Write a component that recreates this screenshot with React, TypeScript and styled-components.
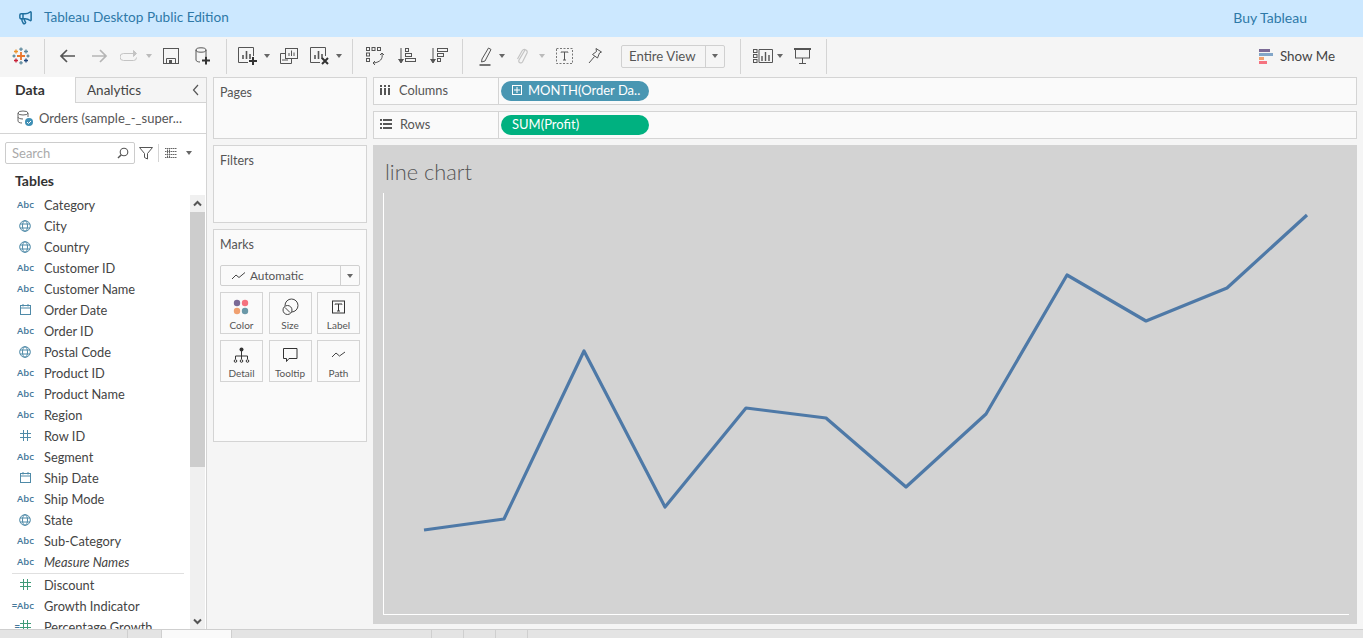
import React from 'react';
import styled, { createGlobalStyle } from 'styled-components';
import { Megaphone } from 'lucide-react';

const GlobalStyle = createGlobalStyle`
  html, body {
    margin: 0;
    padding: 0;
    height: 638px;
    overflow: hidden;
    background: #f5f5f5;
    font-family: "Lato", "Open Sans", sans-serif;
    color: #444;
  }
`;

const Page = styled.div`
  width: 1363px;
  height: 638px;
  display: flex;
  flex-direction: column;
  overflow: hidden;
`;

const Banner = styled.div`
  height: 37px;
  flex: none;
  box-sizing: border-box;
  background: #cce8ff;
  display: flex;
  align-items: center;
  padding: 0 0 3px 18px;
  color: #2e79a8;
  font-size: 14px;
`;

const BannerTitle = styled.span`
  margin-left: 11px;
  flex: 1;
  font-size: 13.6px;
`;

const BuyLink = styled.span`
  margin-right: 56px;
`;

const Toolbar = styled.div`
  height: 38px;
  flex: none;
  display: flex;
  align-items: center;
  background: #f5f5f5;
`;

const Tool = styled.div<{ $ml?: number }>`
  flex: none;
  margin-left: ${(p) => p.$ml ?? 0}px;
  display: flex;
  align-items: center;
  justify-content: center;
  svg { display: block; }
`;

const ToolSep = styled.div<{ $ml: number }>`
  flex: none;
  width: 1px;
  height: 35px;
  background: #d4d4d4;
  margin-left: ${(p) => p.$ml}px;
`;

const Caret = styled.div<{ $ml: number; $light?: boolean }>`
  flex: none;
  margin-left: ${(p) => p.$ml}px;
  margin-right: 1px;
  width: 0;
  height: 0;
  border-left: 3px solid transparent;
  border-right: 3px solid transparent;
  border-top: 4px solid ${(p) => (p.$light ? '#bbb' : '#666')};
`;

const FitSelect = styled.div`
  flex: none;
  margin-left: 19px;
  width: 104px;
  height: 23px;
  box-sizing: border-box;
  border: 1px solid #d0d0d0;
  border-radius: 2px;
  display: flex;
  align-items: center;
  font-size: 13.2px;
  color: #555;
`;

const FitLabel = styled.span`
  flex: 1;
  padding-left: 7px;
`;

const FitArrow = styled.div`
  width: 18px;
  height: 100%;
  border-left: 1px solid #d0d0d0;
  display: flex;
  align-items: center;
  justify-content: center;
`;

const ShowMe = styled.div`
  margin-left: auto;
  margin-right: 28px;
  display: flex;
  align-items: center;
  gap: 6px;
  font-size: 13.4px;
  color: #444;
`;

const Main = styled.div`
  flex: 1;
  min-height: 0;
  display: flex;
  padding: 2px 6px 0 0;
  gap: 6px;
`;

const DataPane = styled.div`
  width: 207px;
  flex: none;
  box-sizing: border-box;
  background: #fff;
  border-right: 1px solid #d4d4d4;
  display: flex;
  flex-direction: column;
  overflow: hidden;
`;

const Tabs = styled.div`
  height: 26px;
  flex: none;
  display: flex;
`;

const DataTab = styled.div`
  width: 60px;
  padding-left: 15px;
  font-size: 14px;
  font-weight: 700;
  line-height: 26px;
  color: #333;
`;

const AnalyticsTab = styled.div`
  flex: 1;
  box-sizing: border-box;
  background: #f5f5f5;
  border: 1px solid #d4d4d4;
  border-right: none;
  padding-left: 11px;
  font-size: 13.5px;
  line-height: 24px;
  color: #444;
  display: flex;
  align-items: center;
  justify-content: space-between;
`;

const SourceRow = styled.div`
  height: 31px;
  flex: none;
  box-sizing: border-box;
  border-bottom: 1px solid #d4d4d4;
  display: flex;
  align-items: center;
  padding-left: 17px;
  gap: 6px;
  font-size: 13px;
  color: #555;
`;

const SearchRow = styled.div`
  flex: none;
  height: 30px;
  box-sizing: border-box;
  padding: 8px 0 0 5px;
  display: flex;
  align-items: center;
`;

const SearchBox = styled.div`
  width: 130px;
  height: 22px;
  box-sizing: border-box;
  border: 1px solid #ccc;
  border-radius: 2px;
  display: flex;
  align-items: center;
  justify-content: space-between;
  padding: 0 5px 0 6px;
  font-size: 13px;
  color: #aaa;
`;

const VSep = styled.div`
  width: 1px;
  height: 18px;
  margin-left: 5px;
  background: #d4d4d4;
`;

const TablesHead = styled.div`
  flex: none;
  height: 27px;
  margin-top: 3px;
  line-height: 27px;
  padding-left: 15px;
  font-size: 14px;
  font-weight: 700;
  color: #333;
`;

const ListWrap = styled.div`
  flex: 1;
  min-height: 0;
  display: flex;
  overflow: hidden;
`;

const FieldList = styled.div`
  flex: 1;
  min-width: 0;
`;

const FieldRow = styled.div`
  height: 21px;
  display: flex;
  align-items: center;
  font-size: 12.8px;
  color: #444;
  white-space: nowrap;
`;

const FieldIcon = styled.div`
  width: 44px;
  flex: none;
  box-sizing: border-box;
  padding-right: 10px;
  display: flex;
  justify-content: flex-end;
  font-size: 9.5px;
  font-weight: 600;
  font-family: "Open Sans", sans-serif;
  color: #45789a;
  svg { margin-right: 3px; display: block; }
`;

const FieldName = styled.span<{ $italic?: boolean }>`
  font-style: ${(p) => (p.$italic ? 'italic' : 'normal')};
`;

const FieldDivider = styled.div`
  height: 1px;
  margin: 1px 6px 0 12px;
  background: #e0e0e0;
`;

const Scrollbar = styled.div`
  width: 15px;
  flex: none;
  background: #f0f0f0;
  display: flex;
  flex-direction: column;
  margin: 1px 1px 0 0;
  height: 435px;
`;

const ScrollButton = styled.div<{ $end?: boolean }>`
  height: 17px;
  flex: none;
  margin-top: ${(p) => (p.$end ? 'auto' : '0')};
  display: flex;
  align-items: center;
  justify-content: center;
`;

const ScrollThumb = styled.div`
  height: 255px;
  flex: none;
  background: #cdcdcd;
`;

const Cards = styled.div`
  width: 154px;
  flex: none;
  display: flex;
  flex-direction: column;
  gap: 6px;
`;

const Card = styled.div<{ $h: number }>`
  height: ${(p) => p.$h}px;
  box-sizing: border-box;
  border: 1px solid #d4d4d4;
  background: #fafafa;
  padding: 7px 6px 0;
  font-size: 12.5px;
  line-height: 15px;
  color: #555;
`;

const MarkSelect = styled.div`
  margin-top: 13px;
  height: 21px;
  box-sizing: border-box;
  border: 1px solid #d0d0d0;
  border-radius: 2px;
  display: flex;
  align-items: center;
  font-size: 11.8px;
  color: #555;
`;

const MarkLabel = styled.div`
  flex: 1;
  display: flex;
  align-items: center;
  justify-content: flex-start;
  padding-left: 11px;
  gap: 5px;
`;

const MarkArrow = styled.div`
  width: 18px;
  height: 100%;
  border-left: 1px solid #d0d0d0;
  display: flex;
  align-items: center;
  justify-content: center;
`;

const MarkGrid = styled.div`
  margin-top: 6px;
  display: grid;
  grid-template-columns: 43px 43px 43px;
  grid-auto-rows: 42px;
  justify-content: space-between;
  row-gap: 6px;
`;

const MarkButton = styled.div`
  box-sizing: border-box;
  border: 1px solid #d4d4d4;
  display: flex;
  flex-direction: column;
  align-items: center;
  font-size: 10px;
  line-height: 12px;
  color: #555;
  padding-top: 5px;
  svg { display: block; height: 19px; }
`;

const MarkName = styled.span`
  margin-top: 2px;
`;

const Workspace = styled.div`
  flex: 1;
  min-width: 0;
  display: flex;
  flex-direction: column;
  gap: 6px;
`;

const Shelf = styled.div`
  height: 28px;
  flex: none;
  box-sizing: border-box;
  border: 1px solid #d4d4d4;
  background: #fafafa;
  display: flex;
  align-items: center;
`;

const ShelfLabel = styled.div`
  width: 125px;
  height: 100%;
  box-sizing: border-box;
  border-right: 1px solid #d4d4d4;
  display: flex;
  align-items: center;
  padding: 0 0 2px 6px;
  gap: 8px;
  font-size: 12.8px;
  color: #555;
`;

const Pill = styled.div<{ $bg: string; $pad: number }>`
  margin-left: 2px;
  width: 148px;
  height: 20px;
  box-sizing: border-box;
  border-radius: 10px;
  background: ${(p) => p.$bg};
  color: #fff;
  font-size: 13px;
  display: flex;
  align-items: center;
  gap: 6px;
  padding: 0 0 2px ${(p) => p.$pad}px;
  white-space: nowrap;
`;

const View = styled.div`
  height: 479px;
  flex: none;
  background: #d3d3d3;
  display: flex;
  flex-direction: column;
  padding: 0 8px 10px 10px;
  box-sizing: border-box;
`;

const ViewTitle = styled.div`
  height: 48px;
  flex: none;
  padding: 13px 0 0 2px;
  box-sizing: border-box;
  font-size: 21.8px;
  font-weight: 300;
  color: #555;
`;

const ChartFrame = styled.div`
  flex: none;
  width: 966px;
  height: 422px;
  box-sizing: border-box;
  border-left: 1px solid #fff;
  border-bottom: 1px solid #fff;
  svg { display: block; }
`;

const SheetStrip = styled.div`
  height: 8px;
  flex: none;
  background: #e4e4e4;
  border-top: 1px solid #cfcfcf;
  display: flex;
`;

const SheetTab = styled.div<{ $w: number; $active?: boolean }>`
  width: ${(p) => p.$w}px;
  flex: none;
  box-sizing: border-box;
  border-right: 1px solid #cfcfcf;
  background: ${(p) => (p.$active ? '#fafafa' : 'transparent')};
`;

const ink = '#555';

const Svg: React.FC<{ w: number; h: number; children: React.ReactNode }> = ({ w, h, children }) => (
  <svg width={w} height={h} viewBox={`0 0 ${w} ${h}`} fill="none" stroke={ink} strokeWidth={1}>
    {children}
  </svg>
);

const Logo = () => (
  <svg width="18" height="18" viewBox="0 0 18 18" fill="none" strokeWidth={1.3}>
    <path d="M9 5v8M5 9h8" stroke="#e8762c" strokeWidth={1.8} />
    <path d="M9 .5v3.5M7.2 2.2h3.6M9 14v3.5M7.2 15.8h3.6" stroke="#5b879b" />
    <path d="M4 2.5v4M2 4.5h4" stroke="#eb9129" />
    <path d="M14 2.5v4M12 4.5h4" stroke="#5b879b" />
    <path d="M.5 9h3M2 7.5v3M14.5 9h3M16 7.5v3" stroke="#59879b" />
    <path d="M4 11.5v4M2 13.5h4" stroke="#c72037" />
    <path d="M14 11.5v4M12 13.5h4" stroke="#1f447a" />
  </svg>
);

const ArrowIcon: React.FC<{ dir: 'l' | 'r' }> = ({ dir }) => (
  <svg width="17" height="14" viewBox="0 0 17 14" fill="none" stroke={dir === 'l' ? '#555' : '#b5b5b5'} strokeWidth={1.7}>
    {dir === 'l' ? <path d="M16 7H2M8 1 2 7l6 6" /> : <path d="M1 7h14M9 1l6 6-6 6" />}
  </svg>
);

const RedoIcon = () => (
  <svg width="19" height="12" viewBox="0 0 19 12" fill="none" stroke="#c4c4c4" strokeWidth={1}>
    <path d="M13 3.5H3.5a3 3 0 0 0 0 7h10a3 3 0 0 0 3-3" />
    <path d="M13.5 .5v6l3-3z" fill="#c4c4c4" />
  </svg>
);

const SaveIcon = () => (
  <Svg w={16} h={16}>
    <rect x=".5" y=".5" width="15" height="15" />
    <path d="M3.5 15.5v-5h9v5" />
    <rect x="6" y="12" width="3" height="3" fill={ink} stroke="none" />
  </Svg>
);

const Plus: React.FC<{ x: number; y: number }> = ({ x, y }) => (
  <path d={`M${x} ${y - 4}v8M${x - 4} ${y}h8`} stroke="#333" strokeWidth={2} />
);

const DataAddIcon = () => (
  <Svg w={16} h={18}>
    <ellipse cx="6" cy="3" rx="5" ry="2.2" />
    <path d="M1 3v10c0 1.2 2 2 4 2M11 3v6" />
    <Plus x={11} y={13.5} />
  </Svg>
);

const BarsInFrame = () => (
  <>
    <path d="M5 12V8M8.5 12V4M12 12V7" strokeWidth={1.6} />
    <path d="M10 15.5H.5V.5h15V9" />
  </>
);

const NewSheetIcon = () => (
  <Svg w={20} h={19}>
    <BarsInFrame />
    <Plus x={15} y={14} />
  </Svg>
);

const DuplicateIcon = () => (
  <Svg w={18} h={16}>
    <rect x="5.5" y=".5" width="12" height="10" />
    <path d="M9 8V5M11.5 8V2.5M14 8V4.5" />
    <path d="M5.5 5.5H.5v10h11v-5" />
    <path d="M3 13v-2M5 13v-2M7 13v-2" />
  </Svg>
);

const ClearIcon = () => (
  <Svg w={20} h={19}>
    <BarsInFrame />
    <path d="M12 11l6 6M18 11l-6 6" stroke="#333" strokeWidth={2} />
  </Svg>
);

const SwapIcon = () => (
  <Svg w={18} h={18}>
    <rect x=".5" y=".5" width="3" height="3" />
    <rect x="6" y=".5" width="3" height="3" />
    <rect x="11.5" y=".5" width="3" height="3" />
    <rect x=".5" y="6" width="3" height="3" />
    <rect x=".5" y="11.5" width="3" height="3" />
    <path d="M16 7c1 5-2 8-8 9" />
    <path d="M14 8l2-2 2 2M9 14l-2 2 2 2" />
  </Svg>
);

const SortIcon: React.FC<{ desc?: boolean }> = ({ desc }) => (
  <Svg w={18} h={16}>
    <path d="M3 0v14M.5 11 3 15l2.5-4" fill={ink} />
    {desc ? (
      <>
        <rect x="7.5" y=".5" width="10" height="3" />
        <rect x="7.5" y="5.5" width="6" height="3" />
        <rect x="7.5" y="10.5" width="3" height="3" />
      </>
    ) : (
      <>
        <rect x="7.5" y=".5" width="3" height="3" />
        <rect x="7.5" y="5.5" width="6" height="3" />
        <rect x="7.5" y="10.5" width="10" height="3" />
      </>
    )}
  </Svg>
);

const HighlightIcon = () => (
  <Svg w={13} h={19}>
    <path d="M3 12 9.5 1 12 2.5 6 14l-3.5 1z" />
    <path d="M.5 18h11" strokeWidth={1.6} />
  </Svg>
);

const ClipIcon = () => (
  <svg width="12" height="17" viewBox="0 0 12 17" fill="none" stroke="#c4c4c4" strokeWidth={1.2}>
    <path d="M9 2 3 12c-1 2.5 2 4 3.5 2L11 5c1-3-3-5-5-2L1.5 11" />
  </svg>
);

const TextBoxIcon = () => (
  <svg width="17" height="16" viewBox="0 0 17 16" fill="none" stroke="#777" strokeWidth={1}>
    <rect x=".5" y=".5" width="16" height="15" strokeDasharray="2 1.5" />
    <path d="M5 4.5V4h7v.5M8.5 4v8M7 12h3" stroke="#555" />
  </svg>
);

const PinIcon = () => (
  <Svg w={14} h={16}>
    <path d="M8 .5 13.5 4l-2 1-2 5-5-3.5 4-3z" />
    <path d="M6.5 8.5 1 15" />
  </Svg>
);

const ShowPanelIcon = () => (
  <Svg w={20} h={15}>
    <rect x=".5" y=".5" width="3.5" height="3" />
    <rect x=".5" y="5.5" width="3.5" height="3" />
    <rect x=".5" y="10.5" width="3.5" height="3" />
    <path d="M6 .5h13.5v13H6z" />
    <path d="M9 12V7M12.5 12V3M16 12V6" strokeWidth={1.4} />
  </Svg>
);

const PresentIcon = () => (
  <Svg w={17} h={16}>
    <path d="M0 1h17" strokeWidth={2} />
    <rect x="1.5" y="1" width="14" height="9" />
    <path d="M8.5 10v5M5 15.5h7" />
  </Svg>
);

const ShowMeIcon = () => (
  <svg width="15" height="15" viewBox="0 0 15 15">
    <rect x="0" y="0" width="11" height="3" fill="#7b6a96" />
    <rect x="0" y="4" width="14" height="3" fill="#82a6c8" />
    <rect x="0" y="8" width="5" height="3" fill="#f0a070" />
    <rect x="0" y="12" width="8" height="3" fill="#f5727f" />
  </svg>
);

const Chevron: React.FC<{ up?: boolean }> = ({ up }) => (
  <svg width="9" height="7" viewBox="0 0 9 7" fill="none" stroke="#555" strokeWidth={2}>
    <path d={up ? 'M1 5.5 4.5 2 8 5.5' : 'M1 1.5 4.5 5 8 1.5'} />
  </svg>
);

const SourceIcon = () => (
  <svg width="16" height="16" viewBox="0 0 16 16" fill="none" stroke="#666" strokeWidth={1}>
    <ellipse cx="6" cy="3" rx="5" ry="2" />
    <path d="M1 3v8c0 1 1.5 2 4 2M11 3v4M1 7c0 1 2 2 5 2" />
    <circle cx="12" cy="12" r="4" fill="#3f8fb5" stroke="none" />
    <path d="M10 12l1.5 1.5L14 11" stroke="#fff" />
  </svg>
);

const SearchIcon = () => (
  <svg width="12" height="12" viewBox="0 0 12 12" fill="none" stroke="#555" strokeWidth={1.1}>
    <circle cx="7" cy="5" r="3.8" />
    <path d="M4.3 7.8 1 11" strokeWidth={1.5} />
  </svg>
);

const FunnelIcon = () => (
  <svg width="14" height="13" viewBox="0 0 14 13" fill="none" stroke="#555" strokeWidth={1}>
    <path d="M.5 .5h13L8.5 6.5V12l-3-1.5v-4z" />
  </svg>
);

const ListGridIcon = () => (
  <svg width="12" height="10" viewBox="0 0 12 10" fill="none" stroke="#666" strokeWidth={1}>
    <path d="M0 .5h12M0 3.5h12M0 6.5h12M0 9.5h12M2.5 0v10M4.5 0v10" strokeDasharray="1.5 .5" />
  </svg>
);

const GlobeIcon = () => (
  <svg width="12" height="12" viewBox="0 0 12 12" fill="none" stroke="#4f8aa8" strokeWidth={1}>
    <circle cx="6" cy="6" r="5.3" />
    <ellipse cx="6" cy="6" rx="2.5" ry="5.3" />
    <path d="M1 4h10M1 8h10" />
  </svg>
);

const CalendarIcon = () => (
  <svg width="11" height="11" viewBox="0 0 11 11" fill="none" stroke="#4f8aa8" strokeWidth={1}>
    <rect x=".5" y="1.5" width="10" height="9" />
    <path d="M.5 4h10M3 0v2.5M8 0v2.5" />
  </svg>
);

const HashIcon: React.FC<{ color: string }> = ({ color }) => (
  <svg width="11" height="11" viewBox="0 0 11 11" fill="none" stroke={color} strokeWidth={1}>
    <path d="M3.5 0v11M7.5 0v11M0 3.5h11M0 7.5h11" />
  </svg>
);

const ColumnsIcon = () => (
  <svg width="11" height="10" viewBox="0 0 11 10" fill="#555">
    <rect x="0" y="3" width="2" height="7" />
    <rect x="4" y="3" width="2" height="7" />
    <rect x="8" y="3" width="2" height="7" />
    <rect x="0" y="0" width="2" height="2" />
    <rect x="4" y="0" width="2" height="2" />
    <rect x="8" y="0" width="2" height="2" />
  </svg>
);

const RowsIcon = () => (
  <svg width="12" height="10" viewBox="0 0 12 10" fill="#555">
    <rect x="0" y="0" width="2" height="2" />
    <rect x="3" y="0" width="9" height="2" />
    <rect x="0" y="4" width="2" height="2" />
    <rect x="3" y="4" width="9" height="2" />
    <rect x="0" y="8" width="2" height="2" />
    <rect x="3" y="8" width="9" height="2" />
  </svg>
);

const PlusBox = () => (
  <svg width="10" height="10" viewBox="0 0 10 10" fill="none" stroke="#fff" strokeWidth={1}>
    <rect x=".5" y=".5" width="9" height="9" />
    <path d="M5 2v6M2 5h6" />
  </svg>
);

const LineMarkIcon = () => (
  <svg width="13" height="8" viewBox="0 0 13 8" fill="none" stroke="#444" strokeWidth={1}>
    <path d="M0 7 4 3l3 2.5L13 .5" />
  </svg>
);

const ColorIcon = () => (
  <svg width="19" height="19" viewBox="0 0 19 19">
    <circle cx="5" cy="5" r="3.2" fill="#7b6a96" />
    <circle cx="13" cy="5" r="3.2" fill="#f5727f" />
    <circle cx="5" cy="13" r="3.2" fill="#f0a070" />
    <circle cx="13" cy="13" r="3.2" fill="#6a98a8" />
  </svg>
);

const SizeIcon = () => (
  <svg width="19" height="19" viewBox="0 0 19 19" fill="none" stroke="#444" strokeWidth={1}>
    <circle cx="10.5" cy="7.5" r="6.5" />
    <circle cx="6.5" cy="12" r="4.5" fill="#fafafa" />
    <path d="M4 9.5 9 14.5" />
  </svg>
);

const LabelIcon = () => (
  <svg width="19" height="19" viewBox="0 0 19 19" fill="none" stroke="#333" strokeWidth={1}>
    <rect x="3.5" y="3" width="12" height="12" />
    <path d="M6 6.5V6h7v.5M9.5 6v7M8 13h3" />
  </svg>
);

const DetailIcon = () => (
  <svg width="19" height="19" viewBox="0 0 19 19" fill="none" stroke="#333" strokeWidth={1}>
    <circle cx="9.5" cy="3.5" r="2" fill="#333" stroke="none" />
    <path d="M9.5 5v8M3.5 13v-3h12v3" />
    <circle cx="3.5" cy="15" r="1.3" />
    <circle cx="9.5" cy="15" r="1.3" />
    <circle cx="15.5" cy="15" r="1.3" />
  </svg>
);

const TooltipIcon = () => (
  <svg width="19" height="19" viewBox="0 0 19 19" fill="none" stroke="#333" strokeWidth={1}>
    <path d="M2.5 2.5h13.5v10H8L5.5 15.5v-3h-3z" />
  </svg>
);

const PathIcon = () => (
  <svg width="19" height="19" viewBox="0 0 19 19" fill="none" stroke="#444" strokeWidth={1}>
    <path d="M3 11 7 7l3.5 3L16 6" />
  </svg>
);

type FieldKind = 'abc' | 'globe' | 'date' | 'hash' | 'dimHash' | 'calcAbc' | 'calcHash';

const dimensions: { name: string; kind: FieldKind; italic?: boolean }[] = [
  { name: 'Category', kind: 'abc' },
  { name: 'City', kind: 'globe' },
  { name: 'Country', kind: 'globe' },
  { name: 'Customer ID', kind: 'abc' },
  { name: 'Customer Name', kind: 'abc' },
  { name: 'Order Date', kind: 'date' },
  { name: 'Order ID', kind: 'abc' },
  { name: 'Postal Code', kind: 'globe' },
  { name: 'Product ID', kind: 'abc' },
  { name: 'Product Name', kind: 'abc' },
  { name: 'Region', kind: 'abc' },
  { name: 'Row ID', kind: 'dimHash' },
  { name: 'Segment', kind: 'abc' },
  { name: 'Ship Date', kind: 'date' },
  { name: 'Ship Mode', kind: 'abc' },
  { name: 'State', kind: 'globe' },
  { name: 'Sub-Category', kind: 'abc' },
  { name: 'Measure Names', kind: 'abc', italic: true },
];

const measures: { name: string; kind: FieldKind }[] = [
  { name: 'Discount', kind: 'hash' },
  { name: 'Growth Indicator', kind: 'calcAbc' },
  { name: 'Percentage Growth', kind: 'calcHash' },
];

const fieldGlyph = (kind: FieldKind) => {
  if (kind === 'globe') return <GlobeIcon />;
  if (kind === 'date') return <CalendarIcon />;
  if (kind === 'hash') return <HashIcon color="#3f9a78" />;
  if (kind === 'dimHash') return <HashIcon color="#4f8aa8" />;
  if (kind === 'calcAbc') return '=Abc';
  if (kind === 'calcHash') return <>=<HashIcon color="#3f9a78" /></>;
  return 'Abc';
};

const Field: React.FC<{ name: string; kind: FieldKind; italic?: boolean }> = ({ name, kind, italic }) => (
  <FieldRow>
    <FieldIcon>{fieldGlyph(kind)}</FieldIcon>
    <FieldName $italic={italic}>{name}</FieldName>
  </FieldRow>
);

const points = '424,530 504,519 584,351 665,507 746,408 826,418 906,487 986,414 1067,275 1146,321 1227,288 1307,215';

const marks = [
  { name: 'Color', icon: <ColorIcon /> },
  { name: 'Size', icon: <SizeIcon /> },
  { name: 'Label', icon: <LabelIcon /> },
  { name: 'Detail', icon: <DetailIcon /> },
  { name: 'Tooltip', icon: <TooltipIcon /> },
  { name: 'Path', icon: <PathIcon /> },
];

const sheetTabs = [
  { w: 128 },
  { w: 34 },
  { w: 70, active: true },
  { w: 200 },
  { w: 32 },
  { w: 32 },
  { w: 32 },
];

export default function App() {
  return (
    <Page>
      <GlobalStyle />
      <Banner>
        <Megaphone size={15} color="#1f6f9f" strokeWidth={2.4} />
        <BannerTitle>Tableau Desktop Public Edition</BannerTitle>
        <BuyLink>Buy Tableau</BuyLink>
      </Banner>

      <Toolbar>
        <Tool $ml={12}><Logo /></Tool>
        <ToolSep $ml={14} />
        <Tool $ml={14}><ArrowIcon dir="l" /></Tool>
        <Tool $ml={15}><ArrowIcon dir="r" /></Tool>
        <Tool $ml={12}><RedoIcon /></Tool>
        <Caret $ml={7} $light />
        <Tool $ml={10}><SaveIcon /></Tool>
        <Tool $ml={16}><DataAddIcon /></Tool>
        <ToolSep $ml={15} />
        <Tool $ml={11}><NewSheetIcon /></Tool>
        <Caret $ml={6} />
        <Tool $ml={9}><DuplicateIcon /></Tool>
        <Tool $ml={12}><ClearIcon /></Tool>
        <Caret $ml={6} />
        <ToolSep $ml={9} />
        <Tool $ml={13}><SwapIcon /></Tool>
        <Tool $ml={14}><SortIcon /></Tool>
        <Tool $ml={14}><SortIcon desc /></Tool>
        <ToolSep $ml={14} />
        <Tool $ml={16}><HighlightIcon /></Tool>
        <Caret $ml={7} />
        <Tool $ml={10}><ClipIcon /></Tool>
        <Caret $ml={11} $light />
        <Tool $ml={10}><TextBoxIcon /></Tool>
        <Tool $ml={15}><PinIcon /></Tool>
        <FitSelect>
          <FitLabel>Entire View</FitLabel>
          <FitArrow><Caret $ml={0} /></FitArrow>
        </FitSelect>
        <ToolSep $ml={15} />
        <Tool $ml={12}><ShowPanelIcon /></Tool>
        <Caret $ml={4} />
        <Tool $ml={10}><PresentIcon /></Tool>
        <ToolSep $ml={15} />
        <ShowMe>
          <ShowMeIcon />
          Show Me
        </ShowMe>
      </Toolbar>

      <Main>
        <DataPane>
          <Tabs>
            <DataTab>Data</DataTab>
            <AnalyticsTab>
              Analytics
              <svg width="16" height="12" viewBox="0 0 16 12" fill="none" stroke="#555" strokeWidth={1.2}>
                <path d="M8 1 3.5 6 8 11" />
              </svg>
            </AnalyticsTab>
          </Tabs>
          <SourceRow>
            <SourceIcon />
            Orders (sample_-_super...
          </SourceRow>
          <SearchRow>
            <SearchBox>
              Search
              <SearchIcon />
            </SearchBox>
            <Tool $ml={4}><FunnelIcon /></Tool>
            <VSep />
            <Tool $ml={6}><ListGridIcon /></Tool>
            <Caret $ml={9} />
          </SearchRow>
          <TablesHead>Tables</TablesHead>
          <ListWrap>
            <FieldList>
              {dimensions.map((f) => (
                <Field key={f.name} name={f.name} kind={f.kind} italic={f.italic} />
              ))}
              <FieldDivider />
              {measures.map((f) => (
                <Field key={f.name} name={f.name} kind={f.kind} />
              ))}
            </FieldList>
            <Scrollbar>
              <ScrollButton><Chevron up /></ScrollButton>
              <ScrollThumb />
              <ScrollButton $end><Chevron /></ScrollButton>
            </Scrollbar>
          </ListWrap>
        </DataPane>

        <Cards>
          <Card $h={62}>Pages</Card>
          <Card $h={78}>Filters</Card>
          <Card $h={213}>
            Marks
            <MarkSelect>
              <MarkLabel>
                <LineMarkIcon />
                Automatic
              </MarkLabel>
              <MarkArrow><Caret $ml={0} /></MarkArrow>
            </MarkSelect>
            <MarkGrid>
              {marks.map((m) => (
                <MarkButton key={m.name}>
                  {m.icon}
                  <MarkName>{m.name}</MarkName>
                </MarkButton>
              ))}
            </MarkGrid>
          </Card>
        </Cards>

        <Workspace>
          <Shelf>
            <ShelfLabel>
              <ColumnsIcon />
              Columns
            </ShelfLabel>
            <Pill $bg="#4996b2" $pad={11}>
              <PlusBox />
              MONTH(Order Da..
            </Pill>
          </Shelf>
          <Shelf>
            <ShelfLabel>
              <RowsIcon />
              Rows
            </ShelfLabel>
            <Pill $bg="#00b180" $pad={11}>SUM(Profit)</Pill>
          </Shelf>
          <View>
            <ViewTitle>line chart</ViewTitle>
            <ChartFrame>
              <svg width="965" height="421" viewBox="384 193 965 421" fill="none">
                <polyline points={points} stroke="#4e79a7" strokeWidth={3.2} strokeLinejoin="round" />
              </svg>
            </ChartFrame>
          </View>
        </Workspace>
      </Main>

      <SheetStrip>
        {sheetTabs.map((t, i) => (
          <SheetTab key={i} $w={t.w} $active={t.active} />
        ))}
      </SheetStrip>
    </Page>
  );
}
